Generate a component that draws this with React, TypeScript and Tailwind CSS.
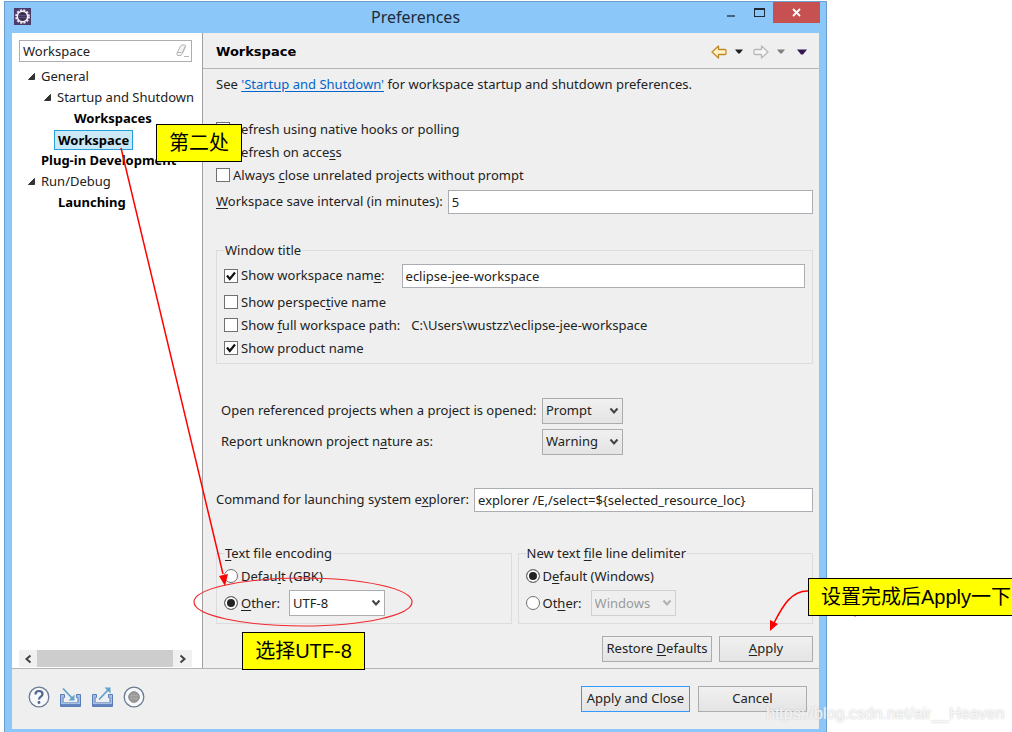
import { useId, type ReactNode } from "react";
import clsx from "clsx";

// "&" marks the letter that gets the keyboard underline
const Mnemonic = ({ text }: { text: string }) => {
  const at = text.indexOf("&");
  if (at < 0) return <>{text}</>;
  return (
    <>
      {text.slice(0, at)}
      <u className="underline decoration-1 underline-offset-2">{text[at + 1]}</u>
      {text.slice(at + 2)}
    </>
  );
};

const Checkbox = ({ label, checked = false }: { label: string; checked?: boolean }) => (
  <label className="flex items-center gap-[3px] whitespace-nowrap">
    <span className="grid size-3.5 shrink-0">
      <input
        type="checkbox"
        defaultChecked={checked}
        className="peer col-start-1 row-start-1 size-3.5 appearance-none border border-[#707070] bg-white"
      />
      <svg
        viewBox="0 0 14 14"
        className="pointer-events-none col-start-1 row-start-1 hidden size-3.5 peer-checked:block"
      >
        <path d="M3 6.500l2.800 3.500L11 3.500" fill="none" stroke="#111" strokeWidth="2.200" />
      </svg>
    </span>
    <span>
      <Mnemonic text={label} />
    </span>
  </label>
);

const Radio = ({ name, label, checked = false }: { name: string; label: string; checked?: boolean }) => (
  <label className="flex items-center gap-[3px] whitespace-nowrap">
    <input
      type="radio"
      name={name}
      defaultChecked={checked}
      className="size-3.5 shrink-0 appearance-none rounded-full border border-[#707070] bg-white checked:bg-[#222] checked:shadow-[inset_0_0_0_2px_#fff]"
    />
    <span>
      <Mnemonic text={label} />
    </span>
  </label>
);

const Chevron = ({ className }: { className?: string }) => (
  <svg viewBox="0 0 10 8" className={clsx("h-2 w-2.5", className)}>
    <path d="M1.500 1.500L5 5.500l3.500-4" fill="none" stroke="currentColor" strokeWidth="2" />
  </svg>
);

interface DropDownProps {
  id?: string;
  label?: string;
  value: string;
  className: string;
  disabled?: boolean;
}

const DropDown = ({ id, label, value, className, disabled }: DropDownProps) => (
  <span className="relative inline-flex">
    <select
      id={id}
      aria-label={label}
      disabled={disabled}
      className={clsx("h-[26px] appearance-none border pr-4 pl-[3px]", className)}
    >
      <option>{value}</option>
    </select>
    <Chevron
      className={clsx(
        "pointer-events-none absolute top-[9px] right-1",
        disabled ? "text-[#b0b0b0]" : "text-[#444]"
      )}
    />
  </span>
);

const TextField = ({ label, value, className }: { label: ReactNode; value: string; className: string }) => {
  const id = useId();
  return (
    <div className={clsx("flex h-6 items-center gap-[5px] whitespace-nowrap", className)}>
      <label htmlFor={id}>{label}</label>
      <input
        id={id}
        defaultValue={value}
        className="h-6 min-w-0 flex-1 border border-[#abadb3] bg-white px-[3px]"
      />
    </div>
  );
};

const Group = ({ title, className, children }: { title: string; className?: string; children: ReactNode }) => (
  <fieldset className={clsx("min-w-0 border border-[#dcdcdc] px-[7px]", className)}>
    <legend className="h-5 px-px leading-5">
      <Mnemonic text={title} />
    </legend>
    {children}
  </fieldset>
);

const tree = [
  { name: "General", indent: "pl-4", open: true },
  { name: "Startup and Shutdown", indent: "pl-8", open: true },
  { name: "Workspaces", indent: "pl-[62px]", match: true },
  { name: "Workspace", indent: "pl-[42px]", match: true, selected: true },
  { name: "Plug-in Development", indent: "pl-[29px]", match: true },
  { name: "Run/Debug", indent: "pl-4", open: true },
  { name: "Launching", indent: "pl-[46px]", match: true },
];

const Sidebar = () => (
  <aside className="flex w-[191px] shrink-0 flex-col border-r border-[#a0a0a0] bg-white pt-[7px]">
    <div className="mx-[7px] mr-2.5 flex h-[22px] items-center border border-[#abadb3] pr-px">
      <input
        aria-label="Filter preferences"
        defaultValue="Workspace"
        className="h-5 min-w-0 flex-1 px-[3px] outline-none"
      />
      <svg viewBox="0 0 16 14" className="h-3.5 w-4" fill="none" stroke="#b5b5b5">
        <path d="M3 9L6.500 2q.5-1 1.500-1h2.500q1.500 0 1 1.500L8.500 9.500l-1.500 2H4q-1.500 0-1-2.500z" fill="#f4f4f4" />
        <path d="M3.500 8.500h4l1-.5 3-6M10 12.500h5" />
      </svg>
    </div>
    <ul className="pt-1">
      {tree.map((item) => (
        <li key={item.name} className={clsx("flex h-[21px] items-center whitespace-nowrap", item.indent)}>
          {item.open && (
            <svg viewBox="0 0 7 7" className="mr-[6px] size-[7px] shrink-0">
              <path d="M6.500 .5v6h-6z" fill="#333" stroke="#333" />
            </svg>
          )}
          <span
            className={clsx(
              item.match && "font-bold text-black",
              item.selected && "h-5 border border-[#26a0da] bg-[#cbe8f6] px-[3px] leading-[18px]"
            )}
          >
            {item.name}
          </span>
        </li>
      ))}
    </ul>
    <div className="mt-auto mr-2.5 mb-px ml-[7px] flex h-[17px] items-center bg-[#f0f0f0] text-[#444]">
      <button aria-label="Scroll left" className="flex w-[18px] justify-center">
        <Chevron className="rotate-90" />
      </button>
      <span className="h-full flex-1 bg-[#cdcdcd]" />
      <button aria-label="Scroll right" className="flex w-[19px] justify-center">
        <Chevron className="-rotate-90" />
      </button>
    </div>
  </aside>
);

const Triangle = ({ className }: { className: string }) => (
  <svg viewBox="0 0 10 6" className={className}>
    <path d="M0 .5h10L6 5.500H4z" fill="currentColor" />
  </svg>
);

const HistoryArrow = ({ fill, stroke, flip }: { fill: string; stroke: string; flip?: boolean }) => (
  <svg viewBox="0 0 16 14" className={clsx("h-3.5 w-4", flip && "-scale-x-100")}>
    <path
      d="M7.500 1L1 7l6.500 6V9.500H14q1 0 1-1v-3q0-1-1-1H7.500z"
      fill={fill}
      stroke={stroke}
      strokeWidth="1.300"
      strokeLinejoin="round"
    />
  </svg>
);

const PageHeader = () => (
  <header className="flex h-9 items-center justify-between border-b border-[#b4b4b4] pr-3 pl-[13px]">
    <h1 className="pt-0.5 font-['DejaVu_Sans',sans-serif] text-[13px] font-bold text-black">Workspace</h1>
    <div className="flex items-center pt-0.5">
      <button aria-label="Back">
        <HistoryArrow fill="#fff3c4" stroke="#c08a2c" />
      </button>
      <button aria-label="Back history" className="ml-2">
        <Triangle className="h-[5px] w-2 text-[#222]" />
      </button>
      <button aria-label="Forward" className="ml-2.5">
        <HistoryArrow fill="#f6f6f6" stroke="#b8b8b8" flip />
      </button>
      <button aria-label="Forward history" className="ml-2">
        <Triangle className="h-[5px] w-2 text-[#808080]" />
      </button>
      <button aria-label="View menu" className="ml-3">
        <Triangle className="h-1.5 w-2.5 text-[#33194f]" />
      </button>
    </div>
  </header>
);

const grayButton = "h-[26px] border border-[#acacac] bg-linear-to-b from-[#f0f0f0] to-[#e4e4e4]";

const WorkspacePage = () => (
  <main className="min-w-0 flex-1 pb-[6px]">
    <PageHeader />
    <div className="pr-1.5 pl-[13px]">
      <p className="pt-[5px] leading-5">
        See{" "}
        <a href="#startup" className="text-[#0066cc] underline underline-offset-2">
          'Startup and Shutdown'
        </a>{" "}
        for workspace startup and shutdown preferences.
      </p>
      <div className="mt-[25px] flex flex-col gap-[3px] leading-5">
        <Checkbox label="&Refresh using native hooks or polling" />
        <Checkbox label="Refresh on acce&ss" />
        <Checkbox label="Always &close unrelated projects without prompt" />
      </div>
      <TextField
        className="mt-[5px]"
        label={<Mnemonic text="&Workspace save interval (in minutes):" />}
        value="5"
      />

      <Group title="Window title" className="mt-[26px] pb-[5px]">
        <div className="mt-1 flex h-6 items-center gap-[17px]">
          <Checkbox label="Show workspace nam&e:" checked />
          <input
            aria-label="Workspace name"
            defaultValue="eclipse-jee-workspace"
            className="h-6 min-w-0 flex-1 border border-[#abadb3] bg-white px-[3px]"
          />
        </div>
        <div className="mt-1 flex flex-col gap-[3px] leading-5">
          <Checkbox label="Show perspec&tive name" />
          <div className="flex gap-[11px]">
            <Checkbox label="Show &full workspace path:" />
            <span className="whitespace-nowrap">C:\Users\wustzz\eclipse-jee-workspace</span>
          </div>
          <Checkbox label="Show product name" checked />
        </div>
      </Group>

      <div className="mt-[34px] grid grid-cols-[317px_auto] items-center justify-start gap-x-1 gap-y-[5px] pl-[5px] whitespace-nowrap">
        <label htmlFor="open-referenced">Open referenced projects when a project is opened:</label>
        <DropDown id="open-referenced" value="Prompt" className={clsx(grayButton, "w-[81px]")} />
        <label htmlFor="unknown-nature">
          <Mnemonic text="Report unknown project n&ature as:" />
        </label>
        <DropDown id="unknown-nature" value="Warning" className={clsx(grayButton, "w-[81px]")} />
      </div>

      <TextField
        className="mt-[33px]"
        label={<Mnemonic text="Command for launching system e&xplorer:" />}
        value="explorer /E,/select=${selected_resource_loc}"
      />

      <div className="mt-[31px] flex gap-1.5 leading-5">
        <Group title="&Text file encoding" className="flex-1 pb-[7px]">
          <div className="mt-[3px]">
            <Radio name="encoding" label="Defau&lt (GBK)" />
          </div>
          <div className="mt-1 flex items-center gap-[9px]">
            <Radio name="encoding" label="&Other:" checked />
            <DropDown label="Encoding" value="UTF-8" className="w-24 border-[#abadb3] bg-white" />
          </div>
        </Group>
        <Group title="New text &file line delimiter" className="flex-1 pb-[7px]">
          <div className="mt-[3px]">
            <Radio name="delimiter" label="D&efault (Windows)" checked />
          </div>
          <div className="mt-1 flex items-center gap-[9px]">
            <Radio name="delimiter" label="Ot&her:" />
            <DropDown
              label="Delimiter"
              value="Windows"
              disabled
              className="w-[85px] border-[#d0d0d0] bg-[#efefef] text-[#9a9a9a]"
            />
          </div>
        </Group>
      </div>

      <div className="mt-3 flex justify-end gap-[7px]">
        <button className={clsx(grayButton, "w-[110px]")}>
          <Mnemonic text="Restore &Defaults" />
        </button>
        <button className={clsx(grayButton, "w-[94px]")}>
          <Mnemonic text="&Apply" />
        </button>
      </div>
    </div>
  </main>
);

const FooterIcons = () => (
  <div className="flex items-center gap-[9px] pb-1">
    <button aria-label="Help">
      <svg viewBox="0 0 22 22" className="size-[22px]">
        <circle cx="11" cy="11" r="9.800" fill="#f7f8fa" stroke="#6b7a94" strokeWidth="1.300" />
        <path
          d="M7.500 8.500q0-3.500 3.500-3.500t3.500 3q0 1.500-1.700 2.700Q11 12 11 13.500"
          fill="none"
          stroke="#4d6690"
          strokeWidth="2.200"
        />
        <circle cx="11" cy="16.500" r="1.400" fill="#4d6690" />
      </svg>
    </button>
    <button aria-label="Import preferences">
      <svg viewBox="0 0 23 22" className="h-[22px] w-[23px]" fill="none">
        <path d="M5.500 8.500h-4v12h20v-12h-4v3h1.500v5H4v-5h1.500z" fill="#a9c0e2" stroke="#5b7db5" />
        <path d="M4 11v5.500h15V11" stroke="#8fabd6" />
        <path d="M2 19h19" stroke="#6485bd" strokeWidth="2" />
        <path d="M4 2.500l9 9.500" stroke="#5fa3cb" strokeWidth="1.800" />
        <path d="M15.500 14.500v-6l-6 6z" fill="#5fa3cb" />
      </svg>
    </button>
    <button aria-label="Export preferences">
      <svg viewBox="0 0 23 22" className="h-[22px] w-[23px]" fill="none">
        <path d="M5.500 8.500h-4v12h20v-12h-4v3h1.500v5H4v-5h1.500z" fill="#a9c0e2" stroke="#5b7db5" />
        <path d="M4 11v5.500h15V11" stroke="#8fabd6" />
        <path d="M2 19h19" stroke="#6485bd" strokeWidth="2" />
        <path d="M8 13.500L17 4" stroke="#5fa3cb" strokeWidth="1.800" />
        <path d="M19.500 1.500v6l-6-6z" fill="#5fa3cb" />
      </svg>
    </button>
    <button aria-label="Record preferences">
      <svg viewBox="0 0 22 22" className="size-[22px]">
        <circle cx="11" cy="11" r="9.800" fill="#f7f8fa" stroke="#6b7a94" strokeWidth="1.300" />
        <circle cx="11" cy="11" r="5.300" fill="#9c9c9c" stroke="#858585" />
        <path d="M7 9.500h8M7 12.500h8" stroke="#aaa" />
      </svg>
    </button>
  </div>
);

const TitleBar = () => (
  <div className="flex h-[31px] items-start">
    <svg viewBox="0 0 18 18" className="mt-1.5 ml-[9px] size-[17px]">
      <rect width="18" height="18" fill="#4b3c6b" />
      <circle cx="9" cy="9" r="6.800" fill="none" stroke="#e6e2ea" strokeWidth="2" strokeDasharray="2.200 1.360" />
      <circle cx="9" cy="9" r="5.500" fill="#3a2c55" stroke="#f4f2f6" strokeWidth="1.600" />
      <path d="M4.500 8h9M4.500 10h9" stroke="#77699a" strokeWidth=".7" />
    </svg>
    <h2 className="flex-1 pt-[3px] pl-[83px] text-center text-base leading-6 text-[#1e2a38]">Preferences</h2>
    <button aria-label="Minimize" className="flex h-[21px] w-7 items-center justify-center pt-1.5">
      <span className="h-0.5 w-2 bg-[#47627c]" />
    </button>
    <button aria-label="Maximize" className="flex h-[21px] w-7 items-center justify-center">
      <span className="h-[9px] w-[11px] border border-t-2 border-[#1e2a38]" />
    </button>
    <button aria-label="Close" className="mr-1.5 flex h-[21px] w-[47px] items-center justify-center bg-[#c75050]">
      <svg viewBox="0 0 9 9" className="size-[9px]">
        <path d="M1 1l7 7M8 1L1 8" stroke="#fff" strokeWidth="1.800" />
      </svg>
    </button>
  </div>
);

const Callout = ({ className, children }: { className: string; children: ReactNode }) => (
  <div
    className={clsx(
      "absolute flex items-center justify-center border border-black bg-[#ffff00] font-['Liberation_Sans','Noto_Sans_CJK_SC',sans-serif] text-xl whitespace-nowrap text-black",
      className
    )}
  >
    {children}
  </div>
);

const Annotations = () => (
  <>
    <svg width="1012" height="732" className="pointer-events-none absolute top-0 left-0" fill="none">
      <path d="M121 148L223 574" stroke="#f00" strokeWidth="1.500" />
      <path d="M225 586l-6-10 9-2z" fill="#f00" />
      <ellipse cx="303" cy="602" rx="109" ry="24" stroke="#f0282d" strokeWidth="1.200" />
      <path d="M809 591c-17-1-26 14-35 32" stroke="#f00" strokeWidth="1.500" />
      <path d="M770 631v-11l8 4z" fill="#f00" />
      <path d="M853 614h4l-2 3z" fill="#f00" />
    </svg>
    <Callout className="top-[124px] left-[156px] h-[38px] w-[86px]">第二处</Callout>
    <Callout className="top-[632px] left-[242px] h-[38px] w-[123px]">选择UTF-8</Callout>
    <Callout className="top-[578px] left-[808px] h-[38px] w-[216px]">设置完成后Apply一下</Callout>
    <span className="absolute top-[704px] left-[766px] font-['Liberation_Sans',sans-serif] text-base leading-5 whitespace-nowrap text-white/80 [text-shadow:0_0_2px_#bbb]">
      https://blog.csdn.net/air__Heaven
    </span>
  </>
);

const App = () => (
  <div className="relative overflow-hidden bg-white pt-px pr-[185px] pl-1 font-['Noto_Sans','Noto_Sans_CJK_SC',sans-serif] text-[13px] text-[#222]">
    <div className="border border-b-0 border-[#6a9fcf] bg-[#8cc7fa] px-[7px] pb-[3px]">
      <div className="-mx-[7px]">
        <TitleBar />
      </div>
      <div className="bg-[#efefef]">
        <div className="flex border-b border-[#b4b4b4]">
          <Sidebar />
          <WorkspacePage />
        </div>
        <footer className="flex h-[60px] items-center justify-between pr-3 pl-4">
          <FooterIcons />
          <div className="flex gap-2">
            <button className="h-[26px] w-[109px] border border-[#3399ff] bg-linear-to-b from-[#f0f0f0] to-[#e4e4e4] whitespace-nowrap">
              Apply and Close
            </button>
            <button className={clsx(grayButton, "w-[109px]")}>Cancel</button>
          </div>
        </footer>
      </div>
    </div>
    <Annotations />
  </div>
);

export default App;
